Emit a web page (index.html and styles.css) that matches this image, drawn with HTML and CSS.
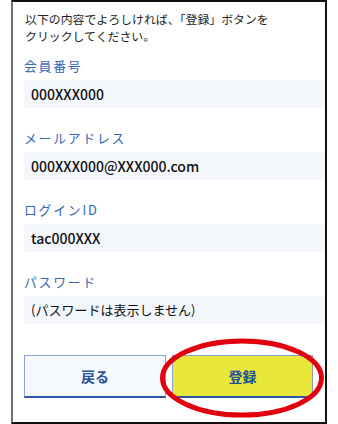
FILE: index.html
```html
<!DOCTYPE html>
<html lang="ja">
<head>
<meta charset="UTF-8">
<title>登録内容の確認</title>
<link rel="stylesheet" href="styles.css">
</head>
<body>

<div class="frame">

    <p class="intro">以下の内容でよろしければ、「登録」ボタンを<br>クリックしてください。</p>

    <!-- 確認項目 -->
    <div class="item">
        <div class="label">会員番号</div>
        <div class="value">000XXX000</div>
    </div>

    <div class="item">
        <div class="label">メールアドレス</div>
        <div class="value">000XXX000@XXX000.com</div>
    </div>

    <div class="item">
        <div class="label">ログインID</div>
        <div class="value">tac000XXX</div>
    </div>

    <div class="item">
        <div class="label">パスワード</div>
        <div class="value jp">(パスワードは表示しません)</div>
    </div>

    <!-- ボタン -->
    <div class="buttons">
        <button class="btn back">戻る</button>
        <button class="btn submit">登録</button>

        <svg class="circle" width="168" height="82" viewBox="0 0 168 82">
            <ellipse cx="83" cy="41" rx="79.5" ry="37" fill="none" stroke="#e2000f" stroke-width="5"/>
        </svg>
    </div>

</div>

</body>
</html>
```

FILE: styles.css
```css
body {
    margin: 0;
    background: #fff;
    font-family: "Noto Sans CJK JP", "Noto Sans", sans-serif;
    color: #1a1a1a;
}

/* 枠 */
.frame {
    box-sizing: border-box;
    margin-left: 11px;
    width: 316px;
    height: 424px;
    border: 2px solid #111;
    border-left-color: #6f6f6f;
    padding: 8px 0 0 11px;
}

.intro {
    margin: 0 0 12px 1px;
    font-size: 11.9px;
    line-height: 17px;
    color: #222;
}

/* 項目 */
.item {
    margin-bottom: 20px;
}

.label {
    height: 20px;
    line-height: 20px;
    margin-bottom: 4px;
    font-size: 12.8px;
    letter-spacing: 1.8px;
    color: #3566b3;
}

.value {
    height: 28px;
    line-height: 28px;
    padding-left: 7px;
    background: #f3f6fb;
    font-size: 14px;
    font-weight: 500;
    color: #111;
}

.value.jp {
    font-size: 13px;
    font-weight: 400;
}

/* ボタン */
.buttons {
    position: relative;
    display: grid;
    grid-template-columns: 142px 141px;
    gap: 6px;
    width: 289px;
    margin-top: 31px;
}

.btn {
    box-sizing: border-box;
    height: 43px;
    border: 1px solid #8b9fd2;
    border-bottom: 2px solid #2a58a6;
    font-family: inherit;
    font-size: 14px;
    font-weight: 700;
    color: #24509c;
    padding: 0;
}

.back {
    background: #f5f8fd;
}

.submit {
    background: #e9e73a;
    border-right-color: #9a9a9a;
}

/* 赤丸 */
.circle {
    position: absolute;
    left: 135px;
    top: -18px;
}
```
